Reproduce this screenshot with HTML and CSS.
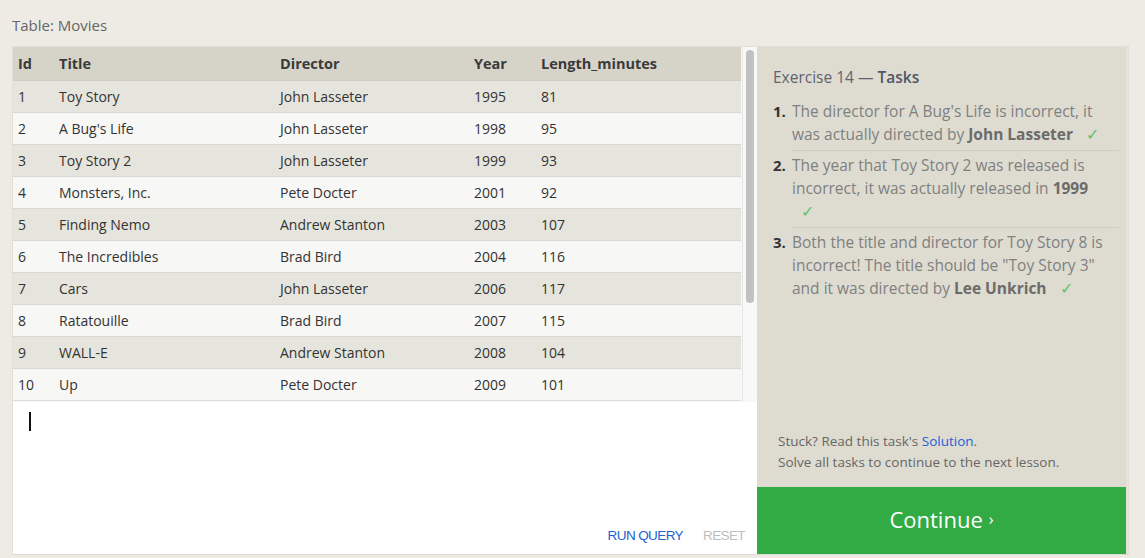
FILE: index.html
```html
<!DOCTYPE html>
<html>
<head>
<meta charset="utf-8">
<link rel="stylesheet" href="styles.css">
</head>
<body>
<div class="caption">Table: Movies</div>
<div class="workspace">
  <div class="left">
    <div class="table-wrap">
      <div class="table-scroll">
        <table class="data">
          <thead>
            <tr><th class="c-id">Id</th><th class="c-title">Title</th><th class="c-dir">Director</th><th class="c-year">Year</th><th class="c-len">Length_minutes</th></tr>
          </thead>
          <tbody>
            <tr><td>1</td><td>Toy Story</td><td>John Lasseter</td><td>1995</td><td>81</td></tr>
            <tr><td>2</td><td>A Bug's Life</td><td>John Lasseter</td><td>1998</td><td>95</td></tr>
            <tr><td>3</td><td>Toy Story 2</td><td>John Lasseter</td><td>1999</td><td>93</td></tr>
            <tr><td>4</td><td>Monsters, Inc.</td><td>Pete Docter</td><td>2001</td><td>92</td></tr>
            <tr><td>5</td><td>Finding Nemo</td><td>Andrew Stanton</td><td>2003</td><td>107</td></tr>
            <tr><td>6</td><td>The Incredibles</td><td>Brad Bird</td><td>2004</td><td>116</td></tr>
            <tr><td>7</td><td>Cars</td><td>John Lasseter</td><td>2006</td><td>117</td></tr>
            <tr><td>8</td><td>Ratatouille</td><td>Brad Bird</td><td>2007</td><td>115</td></tr>
            <tr><td>9</td><td>WALL-E</td><td>Andrew Stanton</td><td>2008</td><td>104</td></tr>
            <tr><td>10</td><td>Up</td><td>Pete Docter</td><td>2009</td><td>101</td></tr>
          </tbody>
        </table>
      </div>
      <div class="scrollbar"><div class="thumb"></div></div>
    </div>
    <div class="editor">
      <div class="cursor"></div>
      <div class="actions">
        <span class="run">RUN QUERY</span>
        <span class="reset">RESET</span>
      </div>
    </div>
  </div>
  <div class="right">
    <div class="tasks">
      <h3 class="tasks-title">Exercise 14 — <b>Tasks</b></h3>
      <ol class="task-list">
        <li><span class="num">1.</span><span class="txt">The director for A Bug's Life is incorrect, it was actually directed by <b>John Lasseter</b> <span class="check">✓</span></span></li>
        <li><span class="num">2.</span><span class="txt">The year that Toy Story 2 was released is incorrect, it was actually released in <b>1999</b> <span class="check">✓</span></span></li>
        <li><span class="num">3.</span><span class="txt">Both the title and director for Toy Story 8 is incorrect! The title should be "Toy Story 3" and it was directed by <b>Lee Unkrich</b> <span class="check">✓</span></span></li>
      </ol>
    </div>
    <div class="help">
      <div>Stuck? Read this task's <span class="link">Solution</span>.</div>
      <div>Solve all tasks to continue to the next lesson.</div>
    </div>
    <div class="continue">Continue <span class="chev">›</span></div>
  </div>
</div>
</body>
</html>
```
FILE: styles.css
```css
html, body {
  margin: 0;
  padding: 0;
}
body {
  background: #eeebe5;
  font-family: "Open Sans", "Noto Sans", sans-serif;
  color: #333;
  width: 1145px;
  height: 558px;
  overflow: hidden;
}
.caption {
  font-size: 15px;
  color: #666;
  padding: 16px 0 0 12px;
  height: 30px;
  box-sizing: border-box;
  line-height: 19px;
}
.workspace {
  display: flex;
  margin-left: 12px;
  margin-top: 16px;
  width: 1117px;
  height: 509px;
  border: 1px solid #e2dfd6;
  border-bottom-color: #dcd9cf;
  box-sizing: border-box;
}
.left {
  width: 744px;
  display: flex;
  flex-direction: column;
}
.table-wrap {
  display: flex;
  height: 355px;
  background: #f8f8f8;
}
.table-scroll {
  flex: 1;
  overflow: hidden;
}
.data {
  border-collapse: collapse;
  width: 728px;
  table-layout: fixed;
  font-size: 14px;
}
.data th, .data td {
  text-align: left;
  padding: 0 0 0 6px;
  white-space: nowrap;
}
.data th {
  background: #d6d4c8;
  height: 33px;
  font-weight: 700;
  color: #3a3a3a;
  font-size: 14.5px;
  border-bottom: 1px solid #d0cec2;
}
.data td {
  height: 31px;
  border-bottom: 1px solid #d9d9d3;
  color: #333;
}
.data th:first-child, .data td:first-child { padding-left: 5px; }
.data tbody tr:nth-child(odd) td { background: #e6e5dd; }
.data tbody tr:nth-child(even) td { background: #f7f7f5; }
.data tbody tr:last-child td { border-bottom: 1px solid #dcdcd6; }
.c-id { width: 35px; }
.c-title { width: 215px; }
.c-dir { width: 188px; }
.c-year { width: 61px; }
.scrollbar {
  width: 15px;
  background: #f8f8f8;
  border-left: 1px solid #e6e6e6;
  box-sizing: border-box;
  padding: 3px 3px 0 3px;
}
.thumb {
  width: 8px;
  height: 253px;
  background: #c1c1c1;
  border-radius: 4px;
}
.editor {
  flex: 1;
  background: #fff;
  display: flex;
  flex-direction: column;
  justify-content: space-between;
  padding: 10px 12px 10px 16px;
}
.cursor {
  width: 2px;
  height: 19px;
  background: #111;
}
.actions {
  display: flex;
  justify-content: flex-end;
  gap: 20px;
  font-family: "Liberation Sans", sans-serif;
  font-size: 13.5px;
  letter-spacing: -0.6px;
  line-height: 16px;
}
.run { color: #2160d0; }
.reset { color: #bdbdbd; }
.right {
  flex: 1;
  background: #dedcd0;
  display: flex;
  flex-direction: column;
  border-right: 2px solid #e6e3da;
}
.tasks {
  flex: 1;
  padding: 20px 7px 0 16px;
}
.tasks-title {
  margin: 0 0 9px 0;
  font-size: 15.5px;
  font-weight: 500;
  color: #5e6372;
  line-height: 20px;
}
.tasks-title b {
  color: #505668;
  font-weight: 600;
}
.task-list {
  list-style: none;
  margin: 0;
  padding: 0;
}
.task-list li {
  display: flex;
  font-size: 15.5px;
  line-height: 23px;
  padding: 4px 0 4px 0;
}
.task-list li + li { padding-top: 0; }
.task-list li + li .txt {
  border-top: 1px solid #cfcdc2;
  padding-top: 3px;
}
.num {
  width: 19px;
  flex: none;
  font-weight: 700;
  color: #333;
  font-size: 15px;
}
.task-list li + li .num { padding-top: 4px; }
.txt {
  color: #808080;
  flex: 1;
  padding-right: 11px;
}
.txt b { color: #6b6b6b; font-weight: 700; }
.check {
  color: #5fc26b;
  margin-left: 9px;
}
.help {
  font-size: 13.5px;
  color: #666;
  line-height: 21px;
  padding: 0 0 14px 21px;
}
.link { color: #1b5fd6; }
.continue {
  height: 67px;
  box-sizing: border-box;
  padding-bottom: 3px;
  background: #32ab44;
  color: #fff;
  font-size: 22px;
  display: flex;
  align-items: center;
  justify-content: center;
}
.chev {
  font-size: 16px;
  margin-left: 6px;
}
```
